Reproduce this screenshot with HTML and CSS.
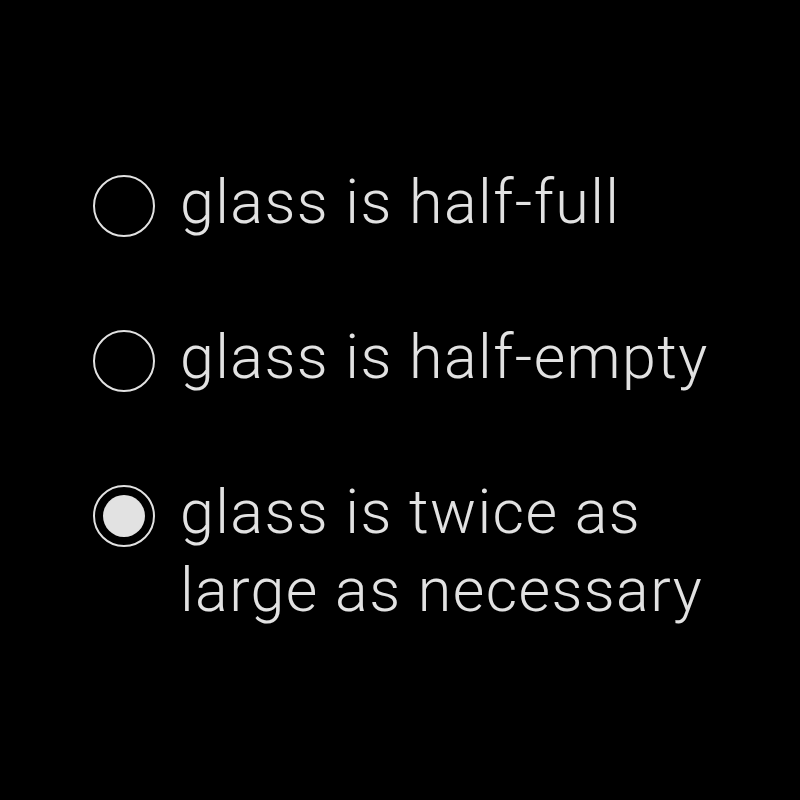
FILE: index.html
```html
<!DOCTYPE html>
<html lang="en">
<head>
    <meta charset="UTF-8">
    <meta name="viewport" content="width=device-width, initial-scale=1.0">
    <title>Glass</title>
    <link rel="stylesheet" href="styles.css">
</head>
<body>

<div class="choices">
    <div class="choice">
        <span class="radio"></span>
        <span class="label">glass is half-full</span>
    </div>
    <div class="choice">
        <span class="radio"></span>
        <span class="label">glass is half-empty</span>
    </div>
    <div class="choice">
        <span class="radio checked"></span>
        <span class="label">glass is twice as<br>large as necessary</span>
    </div>
</div>

</body>
</html>
```

FILE: styles.css
```css
body {
    margin: 0;
    background-color: #000;
    color: #e2e2e2;
    font-family: 'Roboto', sans-serif;
    font-weight: 300;
    width: 800px;
    height: 800px;
}
.choices {
    display: flex;
    flex-direction: column;
    gap: 77px;
    padding: 163px 0 0 93px;
}
.choice {
    display: flex;
    align-items: flex-start;
    gap: 25px;
}
.label {
    font-size: 61px;
    line-height: 78px;
    letter-spacing: 1.4px;
}
/* radio ring, filled dot when selected */
.radio {
    flex: none;
    box-sizing: border-box;
    width: 62px;
    height: 62px;
    margin-top: 12px;
    border: 2.5px solid #e2e2e2;
    border-radius: 50%;
    display: flex;
    align-items: center;
    justify-content: center;
}
.radio.checked::after {
    content: '';
    width: 42px;
    height: 42px;
    border-radius: 50%;
    background-color: #e2e2e2;
}
```
